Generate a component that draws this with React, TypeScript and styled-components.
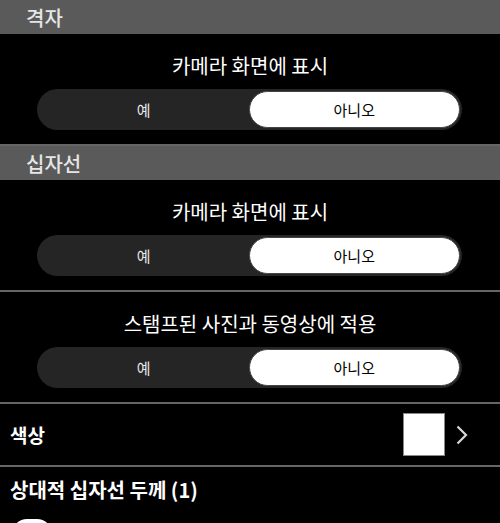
import React, { useState, FC } from 'react'
import styled, { createGlobalStyle } from 'styled-components'

const GlobalStyle = createGlobalStyle`
  html, body {
    margin: 0;
    padding: 0;
    background: #000;
    overflow: hidden;
  }
  body {
    font-family: 'Noto Sans CJK KR', 'Noto Sans', sans-serif;
    color: #fff;
  }
`

const Page = styled.div`
  width: 500px;
  height: 523px;
  overflow: hidden;
  background: #000;
`

const SectionHeader = styled.div`
  height: 34px;
  background: #5a5a5a;
  color: #e6e6e6;
  font-size: 20px;
  font-weight: 500;
  display: flex;
  align-items: center;
  padding-left: 26px;
`

const ToggleItem = styled.div<{ $divider?: boolean }>`
  display: flex;
  flex-direction: column;
  align-items: center;
  padding: 20px 0 14px;
  border-bottom: ${(p) => (p.$divider ? '2px solid #666' : 'none')};
`

const ItemTitle = styled.div`
  font-size: 20px;
  line-height: 24px;
  color: #fff;
  margin-bottom: 11px;
`

const Segmented = styled.div`
  width: 425px;
  height: 41px;
  box-sizing: border-box;
  margin-left: -1px;
  background: #252525;
  border-radius: 21px;
  display: flex;
  padding: 2px;
`

const Segment = styled.button<{ $active: boolean }>`
  flex: 1;
  border: ${(p) => (p.$active ? '1px solid #444' : 'none')};
  border-radius: 19px;
  background: ${(p) => (p.$active ? '#fff' : 'transparent')};
  color: ${(p) => (p.$active ? '#000' : '#e8e8e8')};
  font-family: inherit;
  font-size: 15px;
  padding: 0;
  cursor: pointer;
`

const Row = styled.div`
  height: 61px;
  display: flex;
  align-items: center;
  justify-content: space-between;
  padding: 0 32px 0 10px;
  border-bottom: 2px solid #666;
`

const RowLabel = styled.div`
  font-size: 19px;
  font-weight: 700;
  color: #fff;
`

const ColorPick = styled.div`
  display: flex;
  align-items: center;
  gap: 11px;
`

const Swatch = styled.div<{ $color: string }>`
  width: 42px;
  height: 43px;
  box-sizing: border-box;
  background: ${(p) => p.$color};
  border: 1px solid #888;
`

const ThicknessRow = styled.div`
  padding: 10px 10px 0;
`

const ThicknessLabel = styled.div`
  font-size: 20px;
  line-height: 26px;
  font-weight: 700;
  color: #fff;
`

const SliderThumb = styled.div`
  margin-top: 16px;
  width: 40px;
  height: 30px;
  border-radius: 15px;
  background: #fff;
  margin-left: 2px;
`

interface ToggleProps {
  title: string
  divider?: boolean
}

const YesNo: FC<ToggleProps> = ({ title, divider }) => {
  const [on, setOn] = useState(false)
  return (
    <ToggleItem $divider={divider}>
      <ItemTitle>{title}</ItemTitle>
      <Segmented>
        <Segment $active={on} onClick={() => setOn(true)}>
          예
        </Segment>
        <Segment $active={!on} onClick={() => setOn(false)}>
          아니오
        </Segment>
      </Segmented>
    </ToggleItem>
  )
}

const Chevron = () => (
  <svg width="12" height="20" viewBox="0 0 12 20">
    <polyline
      points="1.5,1.5 10,10 1.5,18.5"
      fill="none"
      stroke="#d8d8d8"
      strokeWidth="2.2"
    />
  </svg>
)

const App: FC = () => (
  <Page>
    <GlobalStyle />
    <SectionHeader>격자</SectionHeader>
    <YesNo title="카메라 화면에 표시" divider />
    <SectionHeader>십자선</SectionHeader>
    <YesNo title="카메라 화면에 표시" divider />
    <YesNo title="스탬프된 사진과 동영상에 적용" divider />
    <Row>
      <RowLabel>색상</RowLabel>
      <ColorPick>
        <Swatch $color="#fff" />
        <Chevron />
      </ColorPick>
    </Row>
    <ThicknessRow>
      <ThicknessLabel>상대적 십자선 두께 (1)</ThicknessLabel>
      <SliderThumb />
    </ThicknessRow>
  </Page>
)

export default App
